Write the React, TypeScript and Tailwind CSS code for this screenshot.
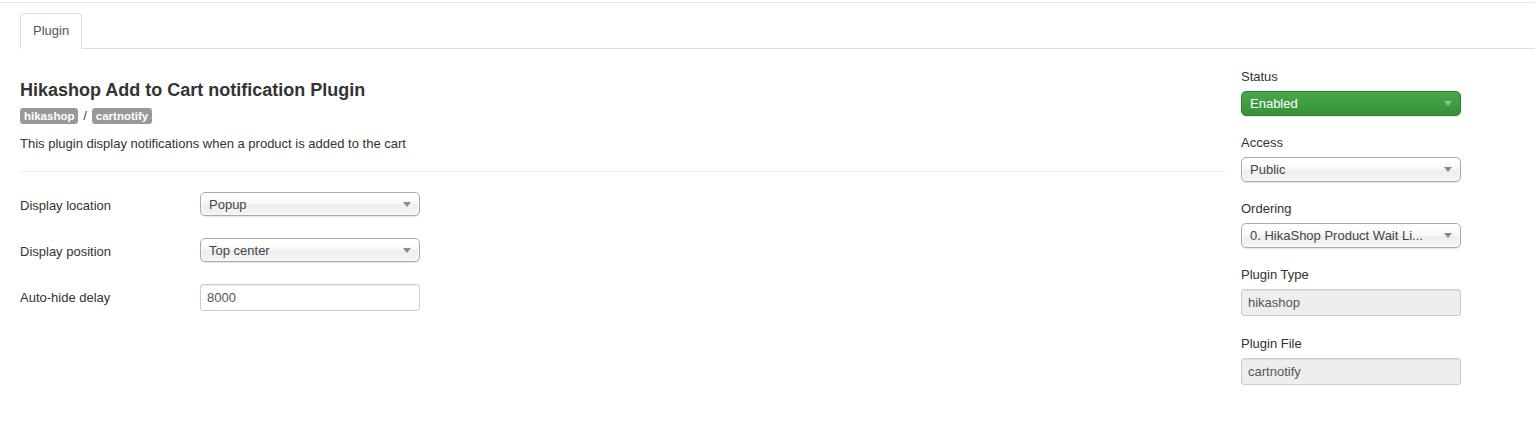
import React from "react";

const Arrow = ({ color = "#888" }: { color?: string }) => (
  <svg width="8" height="5" viewBox="0 0 8 5" className="shrink-0">
    <path d="M0 0 L8 0 L4 5 Z" fill={color} />
  </svg>
);

const Select = ({ value, tall = false }: { value: string; tall?: boolean }) => (
  <div
    className={`flex ${tall ? "h-[25px]" : "h-[24px]"} w-[220px] items-center justify-between rounded-[5px] border border-[#aaa] bg-[linear-gradient(#fff_20%,#f6f6f6_50%,#eee_52%,#f4f4f4_100%)] pl-[8px] pr-[8px] text-[13px] text-[#444] shadow-[inset_0_0_3px_#fff,0_1px_1px_rgba(0,0,0,0.1)]`}
  >
    <span className="truncate pt-[1px]">{value}</span>
    <Arrow />
  </div>
);

const GreenSelect = ({ value }: { value: string }) => (
  <div className="flex h-[25px] w-[220px] items-center justify-between rounded-[5px] border border-[#2f7d2f] bg-[linear-gradient(#4aa94a,#35903a)] pl-[8px] pr-[8px] text-[13px] text-white shadow-[0_1px_1px_rgba(0,0,0,0.1)]">
    <span className="pt-[1px]">{value}</span>
    <Arrow color="#93c393" />
  </div>
);

const DisabledInput = ({ value }: { value: string }) => (
  <div className="flex h-[27px] w-[220px] items-center rounded-[3px] border border-[#ccc] bg-[#eee] pl-[6px] text-[13px] text-[#555] shadow-[inset_0_1px_1px_rgba(0,0,0,0.075)]">
    {value}
  </div>
);

export default function App() {
  return (
    <div
      className="min-h-[428px] w-[1535px] bg-white text-[13px] leading-[18px] text-[#333]"
      style={{ fontFamily: '"Liberation Sans", Arial, sans-serif' }}
    >
      <div className="h-[2px]" />
      <div className="h-[1px] bg-[#e3e3e3]" />
      <div className="pl-[20px] pt-[10px]">
        <div className="flex border-b border-[#ddd]">
          <div className="-mb-[1px] flex h-[36px] items-center rounded-t-[4px] border border-[#ddd] border-b-white bg-white px-[12px] text-[#555]">
            Plugin
          </div>
        </div>
        <div className="mt-[18px] flex">
          <div className="w-[1205px]">
            <h2 className="mt-[13px] text-[18px] font-bold leading-[20px] text-[#333]">
              Hikashop Add to Cart notification Plugin
            </h2>
            <div className="mt-[8px] flex h-[16px] items-center gap-[5px] text-[11.5px]">
              <span className="rounded-[3px] bg-[#999] px-[4px] font-bold leading-[16px] text-white">hikashop</span>
              <span className="text-[12px] text-[#333]">/</span>
              <span className="rounded-[3px] bg-[#999] px-[4px] font-bold leading-[16px] text-white">cartnotify</span>
            </div>
            <p className="mt-[11px] text-[13px] leading-[18px]">
              This plugin display notifications when a product is added to the cart
            </p>
            <div className="mt-[18px] h-[1px] bg-[#eee]" />
            <div className="mt-[20px] flex flex-col gap-[22px]">
              <div className="flex items-center">
                <div className="w-[180px] pt-[3px]">Display location</div>
                <Select value="Popup" />
              </div>
              <div className="flex items-center">
                <div className="w-[180px] pt-[3px]">Display position</div>
                <Select value="Top center" />
              </div>
              <div className="flex items-center">
                <div className="w-[180px] pt-[1px]">Auto-hide delay</div>
                <div className="flex h-[27px] w-[220px] items-center rounded-[3px] border border-[#ccc] bg-white pl-[6px] text-[13px] text-[#555] shadow-[inset_0_1px_1px_rgba(0,0,0,0.075)]">
                  8000
                </div>
              </div>
            </div>
          </div>
          <div className="ml-[16px] w-[220px] pt-[1px]">
            <div className="mb-[18px]">
              <div className="mb-[5px]">Status</div>
              <GreenSelect value="Enabled" />
            </div>
            <div className="mb-[18px]">
              <div className="mb-[5px]">Access</div>
              <Select value="Public" tall />
            </div>
            <div className="mb-[18px]">
              <div className="mb-[5px]">Ordering</div>
              <Select value="0. HikaShop Product Wait Li..." tall />
            </div>
            <div className="mb-[19px]">
              <div className="mb-[5px]">Plugin Type</div>
              <DisabledInput value="hikashop" />
            </div>
            <div>
              <div className="mb-[5px]">Plugin File</div>
              <DisabledInput value="cartnotify" />
            </div>
          </div>
        </div>
      </div>
    </div>
  );
}
